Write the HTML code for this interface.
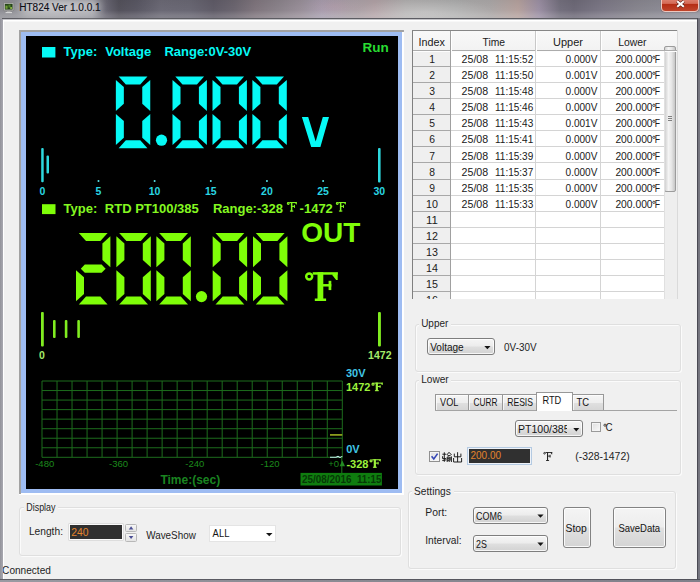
<!DOCTYPE html>
<html><head><meta charset="utf-8"><title>HT824</title><style>
html,body{margin:0;padding:0}
body{width:700px;height:582px;overflow:hidden;position:relative;background:#f0f0f0;font-family:"Liberation Sans",sans-serif;}
.s{position:absolute;left:0;top:0;overflow:visible;}
text{white-space:pre}
.b{position:absolute;}
#title{position:absolute;left:0;top:0;width:700px;height:19px;
 background:
  linear-gradient(180deg,rgba(0,0,0,0.06) 0,rgba(0,0,0,0) 55%,rgba(255,255,255,0.13) 80%,rgba(255,255,255,0.16) 100%),
  radial-gradient(ellipse 70px 14px at 425px 12px,rgba(255,255,255,0.22),rgba(255,255,255,0) 100%),
  radial-gradient(ellipse 30px 12px at 335px 6px,rgba(200,150,170,0.25),rgba(200,150,170,0) 100%),
  linear-gradient(90deg,#8e8e94 0,#909096 2%,#98989e 8%,#8c8c94 13.2%,#686672 15.2%,#54525c 17%,#5a5864 19.5%,#6c6a76 23%,#6a6874 27%,#605c68 30.5%,#6c6670 33.5%,#80767e 36.5%,#8c848c 40%,#9a909a 43%,#a69eae 46%,#aaa2a8 50%,#b2a2a6 53.5%,#b0aeae 58%,#acacac 65%,#aca8a8 70%,#b6a29e 74%,#9c90a4 77%,#74707e 80%,#6e6a78 82%,#7c7886 86%,#88868f 91%,#94949e 100%);}
#tline{position:absolute;left:2px;top:18px;width:696px;height:2px;background:linear-gradient(#5c5c62 0,#5c5c62 50%,#c2c2c6 50%,#c2c2c6 100%);}
#client{position:absolute;left:3px;top:20px;width:694px;height:558.6px;background:#f0f0f0;box-shadow:inset 1px 1px 0 #fff, inset 0 2px 0 #f8f8f8;}
#fl{position:absolute;left:0;top:19px;width:2.9px;height:563px;background:linear-gradient(90deg,#92929a 0,#a2a2aa 70%,#a8a8b0 100%);}
#fr{position:absolute;left:696.9px;top:18px;width:3.1px;height:564px;background:linear-gradient(90deg,#44444c 0,#50505a 30%,#74747e 45%,#787882 100%);}
#fb{position:absolute;left:0;top:578.6px;width:700px;height:3.4px;background:linear-gradient(180deg,rgba(40,40,48,0.75) 0,rgba(40,40,48,0.35) 30%,rgba(40,40,48,0) 50%),linear-gradient(90deg,#9a9aa2 0,#8c8c94 40%,#80808a 100%);}
</style></head><body>
<div id="title"></div>
<div id="tline"></div>
<div id="client"></div>
<div class="b" style="left:20px;top:0px;width:80px;height:14px;border-radius:7px;background:rgba(255,255,255,0.50);filter:blur(5px)"></div>
<svg class="b" style="left:3px;top:2px" width="12" height="12" viewBox="0 0 12 12"><rect x="0.6" y="0.6" width="10.2" height="8.2" rx="1" fill="#c4c4c4" stroke="#7a7a7a" stroke-width="0.8"/><rect x="1.8" y="1.8" width="7.8" height="5.8" fill="#25441a"/><rect x="2.4" y="3.6" width="2.2" height="3.2" fill="#6f9c34"/><rect x="5.4" y="2.6" width="2.2" height="3" fill="#4f7f26"/><rect x="7.2" y="5" width="1.8" height="2" fill="#86b040"/><rect x="4" y="9" width="3.5" height="1.2" fill="#a8a8a8"/><rect x="2.6" y="10.1" width="6.4" height="1" fill="#dcdcdc"/></svg>
<svg class="s" width="1" height="1"><text x="19.20" y="10.70" font-size="10.00" fill="#0c0c14" textLength="81.50" lengthAdjust="spacingAndGlyphs" stroke="#0c0c14" stroke-width="0.1">HT824 Ver 1.0.0.1</text></svg>
<div class="b" style="left:661px;top:-3px;width:36px;height:13.2px;border:1px solid #ecc8c0;border-radius:0 0 4px 4px;background:linear-gradient(#e08878 0,#d46a56 42%,#b42c14 46%,#c0452c 100%);box-shadow:0 0 1px #502020"></div>
<svg class="b" style="left:675px;top:0px" width="11" height="8" viewBox="0 0 11 8"><path d="M2.2 1.2 L8.8 6.8 M8.8 1.2 L2.2 6.8" stroke="#5a2018" stroke-width="3.2" stroke-linecap="butt"/><path d="M2.2 1.2 L8.8 6.8 M8.8 1.2 L2.2 6.8" stroke="#fff" stroke-width="2.1"/></svg>
<div class="b" style="left:19.00px;top:30.00px;width:385.00px;height:465.00px;background:linear-gradient(135deg,#9c9c9c 0,#a8a8a8 49%,#fff 51%,#fff 100%)"></div>
<div class="b" style="left:19.00px;top:30.00px;width:384.00px;height:464.00px;background:#a2a2a2"></div>
<div class="b" style="left:21.00px;top:32.00px;width:383.00px;height:463.00px;background:#fff"></div>
<div class="b" style="left:21.00px;top:32.00px;width:381.00px;height:461.00px;background:#9ebcf2"></div>
<div class="b" style="left:26.00px;top:36.00px;width:372.00px;height:453.00px;background:#000"></div>
<svg class="b" style="left:0;top:0" width="700" height="582" viewBox="0 0 700 582"><polygon points="118.65,76.60 147.45,76.60 140.25,84.60 125.85,84.60" fill="#06faf6"/><polygon points="150.25,79.90 142.25,87.10 142.25,103.80 150.25,110.90" fill="#06faf6"/><polygon points="150.25,113.90 142.25,121.00 142.25,137.70 150.25,144.90" fill="#06faf6"/><polygon points="118.65,148.20 147.45,148.20 140.25,140.20 125.85,140.20" fill="#06faf6"/><polygon points="115.85,113.90 123.85,121.00 123.85,137.70 115.85,144.90" fill="#06faf6"/><polygon points="115.85,79.90 123.85,87.10 123.85,103.80 115.85,110.90" fill="#06faf6"/><polygon points="175.30,76.60 204.10,76.60 196.90,84.60 182.50,84.60" fill="#06faf6"/><polygon points="206.90,79.90 198.90,87.10 198.90,103.80 206.90,110.90" fill="#06faf6"/><polygon points="206.90,113.90 198.90,121.00 198.90,137.70 206.90,144.90" fill="#06faf6"/><polygon points="175.30,148.20 204.10,148.20 196.90,140.20 182.50,140.20" fill="#06faf6"/><polygon points="172.50,113.90 180.50,121.00 180.50,137.70 172.50,144.90" fill="#06faf6"/><polygon points="172.50,79.90 180.50,87.10 180.50,103.80 172.50,110.90" fill="#06faf6"/><polygon points="215.30,76.60 244.10,76.60 236.90,84.60 222.50,84.60" fill="#06faf6"/><polygon points="246.90,79.90 238.90,87.10 238.90,103.80 246.90,110.90" fill="#06faf6"/><polygon points="246.90,113.90 238.90,121.00 238.90,137.70 246.90,144.90" fill="#06faf6"/><polygon points="215.30,148.20 244.10,148.20 236.90,140.20 222.50,140.20" fill="#06faf6"/><polygon points="212.50,113.90 220.50,121.00 220.50,137.70 212.50,144.90" fill="#06faf6"/><polygon points="212.50,79.90 220.50,87.10 220.50,103.80 212.50,110.90" fill="#06faf6"/><polygon points="255.20,76.60 284.00,76.60 276.80,84.60 262.40,84.60" fill="#06faf6"/><polygon points="286.80,79.90 278.80,87.10 278.80,103.80 286.80,110.90" fill="#06faf6"/><polygon points="286.80,113.90 278.80,121.00 278.80,137.70 286.80,144.90" fill="#06faf6"/><polygon points="255.20,148.20 284.00,148.20 276.80,140.20 262.40,140.20" fill="#06faf6"/><polygon points="252.40,113.90 260.40,121.00 260.40,137.70 252.40,144.90" fill="#06faf6"/><polygon points="252.40,79.90 260.40,87.10 260.40,103.80 252.40,110.90" fill="#06faf6"/><circle cx="161.5" cy="140.2" r="5.6" fill="#06faf6"/><polygon points="301.9,117 308.2,117 315.7,141.5 322.8,117 329,117 320.4,146.9 311.2,146.9" fill="#06faf6"/><polygon points="78.80,232.90 107.60,232.90 100.40,240.90 86.00,240.90" fill="#7ffe08"/><polygon points="110.40,236.20 102.40,243.40 102.40,260.10 110.40,267.20" fill="#7ffe08"/><polygon points="80.80,268.70 84.80,264.60 101.60,264.60 105.60,268.70 101.60,272.80 84.80,272.80" fill="#7ffe08"/><polygon points="76.00,270.20 84.00,277.30 84.00,294.00 76.00,301.20" fill="#7ffe08"/><polygon points="78.80,304.50 107.60,304.50 100.40,296.50 86.00,296.50" fill="#7ffe08"/><polygon points="119.20,232.90 148.00,232.90 140.80,240.90 126.40,240.90" fill="#7ffe08"/><polygon points="150.80,236.20 142.80,243.40 142.80,260.10 150.80,267.20" fill="#7ffe08"/><polygon points="150.80,270.20 142.80,277.30 142.80,294.00 150.80,301.20" fill="#7ffe08"/><polygon points="119.20,304.50 148.00,304.50 140.80,296.50 126.40,296.50" fill="#7ffe08"/><polygon points="116.40,270.20 124.40,277.30 124.40,294.00 116.40,301.20" fill="#7ffe08"/><polygon points="116.40,236.20 124.40,243.40 124.40,260.10 116.40,267.20" fill="#7ffe08"/><polygon points="159.20,232.90 188.00,232.90 180.80,240.90 166.40,240.90" fill="#7ffe08"/><polygon points="190.80,236.20 182.80,243.40 182.80,260.10 190.80,267.20" fill="#7ffe08"/><polygon points="190.80,270.20 182.80,277.30 182.80,294.00 190.80,301.20" fill="#7ffe08"/><polygon points="159.20,304.50 188.00,304.50 180.80,296.50 166.40,296.50" fill="#7ffe08"/><polygon points="156.40,270.20 164.40,277.30 164.40,294.00 156.40,301.20" fill="#7ffe08"/><polygon points="156.40,236.20 164.40,243.40 164.40,260.10 156.40,267.20" fill="#7ffe08"/><polygon points="215.50,232.90 244.30,232.90 237.10,240.90 222.70,240.90" fill="#7ffe08"/><polygon points="247.10,236.20 239.10,243.40 239.10,260.10 247.10,267.20" fill="#7ffe08"/><polygon points="247.10,270.20 239.10,277.30 239.10,294.00 247.10,301.20" fill="#7ffe08"/><polygon points="215.50,304.50 244.30,304.50 237.10,296.50 222.70,296.50" fill="#7ffe08"/><polygon points="212.70,270.20 220.70,277.30 220.70,294.00 212.70,301.20" fill="#7ffe08"/><polygon points="212.70,236.20 220.70,243.40 220.70,260.10 212.70,267.20" fill="#7ffe08"/><polygon points="255.80,232.90 284.60,232.90 277.40,240.90 263.00,240.90" fill="#7ffe08"/><polygon points="287.40,236.20 279.40,243.40 279.40,260.10 287.40,267.20" fill="#7ffe08"/><polygon points="287.40,270.20 279.40,277.30 279.40,294.00 287.40,301.20" fill="#7ffe08"/><polygon points="255.80,304.50 284.60,304.50 277.40,296.50 263.00,296.50" fill="#7ffe08"/><polygon points="253.00,270.20 261.00,277.30 261.00,294.00 253.00,301.20" fill="#7ffe08"/><polygon points="253.00,236.20 261.00,243.40 261.00,260.10 253.00,267.20" fill="#7ffe08"/><circle cx="201.5" cy="296.6" r="5.6" fill="#7ffe08"/><rect x="42" y="47" width="13.4" height="10.5" fill="#06faf6"/><rect x="42" y="204.2" width="13.5" height="9.9" fill="#7ffe08"/><rect x="41.2" y="148" width="2.5" height="34.2" rx="1" fill="#2ed8de"/><rect x="46.5" y="155.4" width="2.5" height="18.2" rx="1" fill="#2ed8de"/><rect x="378" y="148" width="2.6" height="34.5" rx="1" fill="#2ed8de"/><circle cx="98.47" cy="181" r="1.0" fill="#58e4ec"/><circle cx="154.63" cy="181" r="1.0" fill="#58e4ec"/><circle cx="210.80" cy="181" r="1.0" fill="#58e4ec"/><circle cx="266.96" cy="181" r="1.0" fill="#58e4ec"/><circle cx="323.12" cy="181" r="1.0" fill="#58e4ec"/><rect x="41" y="312" width="2.8" height="34.4" rx="1" fill="#80ec20"/><rect x="53.00" y="320" width="2.6" height="18" rx="1" fill="#80ec20"/><rect x="64.80" y="320" width="2.6" height="18" rx="1" fill="#80ec20"/><rect x="77.30" y="320" width="2.6" height="18" rx="1" fill="#80ec20"/><rect x="378" y="312" width="2.9" height="34.4" rx="1" fill="#80ec20"/><rect x="41.50" y="381.00" width="1" height="76.30" fill="#1d6c1d"/><rect x="56.52" y="381.00" width="1" height="76.30" fill="#1d6c1d"/><rect x="71.53" y="381.00" width="1" height="76.30" fill="#1d6c1d"/><rect x="86.55" y="381.00" width="1" height="76.30" fill="#1d6c1d"/><rect x="101.56" y="381.00" width="1" height="76.30" fill="#1d6c1d"/><rect x="116.58" y="381.00" width="1" height="76.30" fill="#1d6c1d"/><rect x="131.59" y="381.00" width="1" height="76.30" fill="#1d6c1d"/><rect x="146.60" y="381.00" width="1" height="76.30" fill="#1d6c1d"/><rect x="161.62" y="381.00" width="1" height="76.30" fill="#1d6c1d"/><rect x="176.64" y="381.00" width="1" height="76.30" fill="#1d6c1d"/><rect x="191.65" y="381.00" width="1" height="76.30" fill="#1d6c1d"/><rect x="206.67" y="381.00" width="1" height="76.30" fill="#1d6c1d"/><rect x="221.68" y="381.00" width="1" height="76.30" fill="#1d6c1d"/><rect x="236.69" y="381.00" width="1" height="76.30" fill="#1d6c1d"/><rect x="251.71" y="381.00" width="1" height="76.30" fill="#1d6c1d"/><rect x="266.73" y="381.00" width="1" height="76.30" fill="#1d6c1d"/><rect x="281.74" y="381.00" width="1" height="76.30" fill="#1d6c1d"/><rect x="296.75" y="381.00" width="1" height="76.30" fill="#1d6c1d"/><rect x="311.77" y="381.00" width="1" height="76.30" fill="#1d6c1d"/><rect x="326.78" y="381.00" width="1" height="76.30" fill="#1d6c1d"/><rect x="341.80" y="381.00" width="1" height="76.30" fill="#1d6c1d"/><rect x="42.00" y="380.50" width="300.30" height="1" fill="#1d6c1d"/><rect x="42.00" y="390.04" width="300.30" height="1" fill="#1d6c1d"/><rect x="42.00" y="399.57" width="300.30" height="1" fill="#1d6c1d"/><rect x="42.00" y="409.11" width="300.30" height="1" fill="#1d6c1d"/><rect x="42.00" y="418.65" width="300.30" height="1" fill="#1d6c1d"/><rect x="42.00" y="428.19" width="300.30" height="1" fill="#1d6c1d"/><rect x="42.00" y="437.73" width="300.30" height="1" fill="#1d6c1d"/><rect x="42.00" y="447.26" width="300.30" height="1" fill="#1d6c1d"/><rect x="42.00" y="456.80" width="300.30" height="1" fill="#1d6c1d"/><rect x="330" y="434" width="12.3" height="1.8" fill="#8a9c1c"/><path d="M330 457.3 L336 457.3 L338 456.4 L340 457.4 L342.3 456.6" stroke="#c8f4f4" stroke-width="1.1" fill="none"/><rect x="341.3" y="457" width="1" height="16" fill="#1f7a1f"/><polygon points="342.3,460.5 339.6,466.3 345,466.3" fill="#238a23"/><rect x="300.5" y="472.9" width="81.4" height="12.6" fill="#0f7d0f"/></svg>
<svg class="s" width="1" height="1"><text x="63.50" y="56.00" font-size="13.00" fill="#06faf6" font-weight="bold">Type:</text></svg>
<svg class="s" width="1" height="1"><text x="105.20" y="56.00" font-size="13.00" fill="#06faf6" font-weight="bold">Voltage</text></svg>
<svg class="s" width="1" height="1"><text x="164.40" y="56.00" font-size="13.00" fill="#06faf6" font-weight="bold">Range:0V-30V</text></svg>
<svg class="s" width="1" height="1"><text x="362.50" y="51.90" font-size="13.50" fill="#28dc32" font-weight="bold">Run</text></svg>
<svg class="s" width="1" height="1"><text x="42.30" y="194.70" font-size="10.50" fill="#2ad6e2" font-weight="bold" text-anchor="middle">0</text></svg>
<svg class="s" width="1" height="1"><text x="98.47" y="194.70" font-size="10.50" fill="#2ad6e2" font-weight="bold" text-anchor="middle">5</text></svg>
<svg class="s" width="1" height="1"><text x="154.63" y="194.70" font-size="10.50" fill="#2ad6e2" font-weight="bold" text-anchor="middle">10</text></svg>
<svg class="s" width="1" height="1"><text x="210.80" y="194.70" font-size="10.50" fill="#2ad6e2" font-weight="bold" text-anchor="middle">15</text></svg>
<svg class="s" width="1" height="1"><text x="266.96" y="194.70" font-size="10.50" fill="#2ad6e2" font-weight="bold" text-anchor="middle">20</text></svg>
<svg class="s" width="1" height="1"><text x="323.12" y="194.70" font-size="10.50" fill="#2ad6e2" font-weight="bold" text-anchor="middle">25</text></svg>
<svg class="s" width="1" height="1"><text x="379.29" y="194.70" font-size="10.50" fill="#2ad6e2" font-weight="bold" text-anchor="middle">30</text></svg>
<svg class="s" width="1" height="1"><text x="63.50" y="212.90" font-size="13.00" fill="#84f820" font-weight="bold">Type:</text></svg>
<svg class="s" width="1" height="1"><text x="104.80" y="212.90" font-size="13.00" fill="#84f820" font-weight="bold">RTD PT100/385</text></svg>
<svg class="s" width="1" height="1"><text x="212.90" y="212.90" font-size="13.00" fill="#84f820" font-weight="bold">Range:-328</text></svg>
<svg class="s" width="1" height="1"><text x="299.60" y="212.90" font-size="13.00" fill="#84f820" font-weight="bold">-1472</text></svg>
<svg class="s" width="1" height="1"><g fill="#84f820"><circle cx="288.26" cy="203.45" r="0.90" fill="none" stroke="#84f820" stroke-width="1.10"/><rect x="289.31" y="202.00" width="7.49" height="1.10"/><polygon points="295.09,203.10 296.80,202.00 296.80,204.57 296.35,204.57"/><rect x="290.87" y="202.00" width="1.50" height="9.40"/><rect x="291.62" y="205.82" width="3.27" height="1.10"/><rect x="293.98" y="204.87" width="0.90" height="3.10"/><rect x="289.94" y="210.50" width="3.39" height="1.10"/></g></svg>
<svg class="s" width="1" height="1"><g fill="#84f820"><circle cx="337.26" cy="203.45" r="0.90" fill="none" stroke="#84f820" stroke-width="1.10"/><rect x="338.31" y="202.00" width="7.49" height="1.10"/><polygon points="344.09,203.10 345.80,202.00 345.80,204.57 345.35,204.57"/><rect x="339.87" y="202.00" width="1.50" height="9.40"/><rect x="340.62" y="205.82" width="3.27" height="1.10"/><rect x="342.98" y="204.87" width="0.90" height="3.10"/><rect x="338.94" y="210.50" width="3.39" height="1.10"/></g></svg>
<svg class="s" width="1" height="1"><text x="301.30" y="241.90" font-size="28.00" fill="#7ffe08" font-weight="bold">OUT</text></svg>
<svg class="s" width="1" height="1"><g fill="#7ffe08"><circle cx="309.20" cy="276.43" r="3.00" fill="none" stroke="#7ffe08" stroke-width="2.45"/><rect x="312.70" y="272.20" width="25.00" height="2.50"/><polygon points="332.00,274.70 337.70,272.20 337.70,279.90 336.20,279.90"/><rect x="317.50" y="272.20" width="5.80" height="28.60"/><rect x="320.40" y="284.05" width="10.90" height="2.50"/><rect x="328.60" y="280.80" width="2.70" height="9.30"/><rect x="314.80" y="298.50" width="11.30" height="2.50"/></g></svg>
<svg class="s" width="1" height="1"><text x="42.00" y="358.80" font-size="10.50" fill="#a4ec6a" font-weight="bold" text-anchor="middle">0</text></svg>
<svg class="s" width="1" height="1"><text x="379.80" y="358.80" font-size="10.50" fill="#a4ec6a" font-weight="bold" text-anchor="middle">1472</text></svg>
<svg class="s" width="1" height="1"><text x="346.00" y="377.40" font-size="11.00" fill="#40c6e6" font-weight="bold">30V</text></svg>
<svg class="s" width="1" height="1"><text x="346.00" y="391.40" font-size="11.00" fill="#9cf23c" font-weight="bold">1472</text></svg>
<svg class="s" width="1" height="1"><g fill="#9cf23c"><circle cx="373.03" cy="384.22" r="1.02" fill="none" stroke="#9cf23c" stroke-width="1.20"/><rect x="374.21" y="382.60" width="8.49" height="1.10"/><polygon points="380.77,383.70 382.70,382.60 382.70,384.90 382.19,384.90"/><rect x="375.73" y="382.60" width="2.20" height="8.40"/><rect x="376.83" y="385.96" width="3.70" height="1.10"/><rect x="379.61" y="385.17" width="0.92" height="2.78"/><rect x="374.93" y="390.10" width="3.84" height="1.10"/></g></svg>
<svg class="s" width="1" height="1"><text x="346.20" y="453.40" font-size="11.00" fill="#40c6e6" font-weight="bold">0V</text></svg>
<svg class="s" width="1" height="1"><text x="346.40" y="468.00" font-size="11.00" fill="#9cf23c" font-weight="bold">-328</text></svg>
<svg class="s" width="1" height="1"><g fill="#9cf23c"><circle cx="371.03" cy="460.82" r="1.02" fill="none" stroke="#9cf23c" stroke-width="1.20"/><rect x="372.21" y="459.20" width="8.49" height="1.10"/><polygon points="378.77,460.30 380.70,459.20 380.70,461.50 380.19,461.50"/><rect x="373.73" y="459.20" width="2.20" height="8.40"/><rect x="374.83" y="462.56" width="3.70" height="1.10"/><rect x="377.61" y="461.77" width="0.92" height="2.78"/><rect x="372.93" y="466.70" width="3.84" height="1.10"/></g></svg>
<svg class="s" width="1" height="1"><text x="44.70" y="467.30" font-size="9.50" fill="#1c8a1c" text-anchor="middle">-480</text></svg>
<svg class="s" width="1" height="1"><text x="118.50" y="467.30" font-size="9.50" fill="#1c8a1c" text-anchor="middle">-360</text></svg>
<svg class="s" width="1" height="1"><text x="194.80" y="467.30" font-size="9.50" fill="#1c8a1c" text-anchor="middle">-240</text></svg>
<svg class="s" width="1" height="1"><text x="270.00" y="467.30" font-size="9.50" fill="#1c8a1c" text-anchor="middle">-120</text></svg>
<svg class="s" width="1" height="1"><text x="328.20" y="466.80" font-size="9.50" fill="#1c8a1c">+0</text></svg>
<svg class="s" width="1" height="1"><text x="160.40" y="483.90" font-size="12.00" fill="#1a8420" font-weight="bold">Time:(sec)</text></svg>
<svg class="s" width="1" height="1"><text x="301.90" y="482.90" font-size="10.20" fill="#063806" font-weight="bold" textLength="49.50" lengthAdjust="spacingAndGlyphs">25/08/2016</text></svg>
<svg class="s" width="1" height="1"><text x="357.00" y="482.90" font-size="10.20" fill="#063806" font-weight="bold" textLength="24.30" lengthAdjust="spacingAndGlyphs">11:15</text></svg>
<div class="b" style="left:411.50px;top:30.00px;width:265.50px;height:269.00px;background:#fff"></div>
<div class="b" style="left:411.50px;top:30.00px;width:265.50px;height:21.00px;background:linear-gradient(#f9f9f9,#f2f2f2)"></div>
<div class="b" style="left:411.50px;top:51.00px;width:39.00px;height:248.00px;background:#efefef"></div>
<div class="b" style="left:664.00px;top:46.00px;width:13.00px;height:253.00px;background:#eeeeee"></div>
<div class="b" style="left:664.00px;top:45.60px;width:11.60px;height:146.40px;background:linear-gradient(90deg,#d2d2d2 0,#f4f4f4 35%,#e6e6e6 65%,#c6c6c6 100%);border:1px solid #9c9c9c;border-radius:2px;box-sizing:border-box"></div>
<div class="b" style="left:667.60px;top:116.00px;width:4.60px;height:0.90px;background:#808080"></div>
<div class="b" style="left:667.60px;top:117.90px;width:4.60px;height:0.90px;background:#808080"></div>
<div class="b" style="left:667.60px;top:119.80px;width:4.60px;height:0.90px;background:#808080"></div>
<div class="b" style="left:412.00px;top:50.10px;width:265.00px;height:1.00px;background:#acacac"></div>
<div class="b" style="left:412.00px;top:51.10px;width:265.00px;height:1.00px;background:#fdfdfd"></div>
<div class="b" style="left:412.00px;top:66.15px;width:38.50px;height:1.00px;background:#a8a8a8"></div>
<div class="b" style="left:451.00px;top:66.15px;width:213.00px;height:1.00px;background:#d4d4d4"></div>
<div class="b" style="left:412.00px;top:82.20px;width:38.50px;height:1.00px;background:#a8a8a8"></div>
<div class="b" style="left:451.00px;top:82.20px;width:213.00px;height:1.00px;background:#d4d4d4"></div>
<div class="b" style="left:412.00px;top:98.25px;width:38.50px;height:1.00px;background:#a8a8a8"></div>
<div class="b" style="left:451.00px;top:98.25px;width:213.00px;height:1.00px;background:#d4d4d4"></div>
<div class="b" style="left:412.00px;top:114.30px;width:38.50px;height:1.00px;background:#a8a8a8"></div>
<div class="b" style="left:451.00px;top:114.30px;width:213.00px;height:1.00px;background:#d4d4d4"></div>
<div class="b" style="left:412.00px;top:130.35px;width:38.50px;height:1.00px;background:#a8a8a8"></div>
<div class="b" style="left:451.00px;top:130.35px;width:213.00px;height:1.00px;background:#d4d4d4"></div>
<div class="b" style="left:412.00px;top:146.40px;width:38.50px;height:1.00px;background:#a8a8a8"></div>
<div class="b" style="left:451.00px;top:146.40px;width:213.00px;height:1.00px;background:#d4d4d4"></div>
<div class="b" style="left:412.00px;top:162.45px;width:38.50px;height:1.00px;background:#a8a8a8"></div>
<div class="b" style="left:451.00px;top:162.45px;width:213.00px;height:1.00px;background:#d4d4d4"></div>
<div class="b" style="left:412.00px;top:178.50px;width:38.50px;height:1.00px;background:#a8a8a8"></div>
<div class="b" style="left:451.00px;top:178.50px;width:213.00px;height:1.00px;background:#d4d4d4"></div>
<div class="b" style="left:412.00px;top:194.55px;width:38.50px;height:1.00px;background:#a8a8a8"></div>
<div class="b" style="left:451.00px;top:194.55px;width:213.00px;height:1.00px;background:#d4d4d4"></div>
<div class="b" style="left:412.00px;top:210.60px;width:38.50px;height:1.00px;background:#a8a8a8"></div>
<div class="b" style="left:451.00px;top:210.60px;width:213.00px;height:1.00px;background:#d4d4d4"></div>
<div class="b" style="left:412.00px;top:226.65px;width:38.50px;height:1.00px;background:#a8a8a8"></div>
<div class="b" style="left:451.00px;top:226.65px;width:213.00px;height:1.00px;background:#d4d4d4"></div>
<div class="b" style="left:412.00px;top:242.70px;width:38.50px;height:1.00px;background:#a8a8a8"></div>
<div class="b" style="left:451.00px;top:242.70px;width:213.00px;height:1.00px;background:#d4d4d4"></div>
<div class="b" style="left:412.00px;top:258.75px;width:38.50px;height:1.00px;background:#a8a8a8"></div>
<div class="b" style="left:451.00px;top:258.75px;width:213.00px;height:1.00px;background:#d4d4d4"></div>
<div class="b" style="left:412.00px;top:274.80px;width:38.50px;height:1.00px;background:#a8a8a8"></div>
<div class="b" style="left:451.00px;top:274.80px;width:213.00px;height:1.00px;background:#d4d4d4"></div>
<div class="b" style="left:412.00px;top:290.85px;width:38.50px;height:1.00px;background:#a8a8a8"></div>
<div class="b" style="left:451.00px;top:290.85px;width:213.00px;height:1.00px;background:#d4d4d4"></div>
<div class="b" style="left:450.00px;top:31.00px;width:1.00px;height:268.00px;background:#a0a0a0"></div>
<div class="b" style="left:451.00px;top:31.00px;width:1.00px;height:20.00px;background:#fff"></div>
<div class="b" style="left:535.00px;top:31.00px;width:1.00px;height:20.00px;background:#c8c8c8"></div>
<div class="b" style="left:536.00px;top:31.00px;width:1.00px;height:20.00px;background:#fff"></div>
<div class="b" style="left:599.60px;top:31.00px;width:1.00px;height:20.00px;background:#c8c8c8"></div>
<div class="b" style="left:600.60px;top:31.00px;width:1.00px;height:20.00px;background:#fff"></div>
<div class="b" style="left:535.00px;top:51.00px;width:1.00px;height:248.00px;background:#d4d4d4"></div>
<div class="b" style="left:599.60px;top:51.00px;width:1.00px;height:248.00px;background:#d4d4d4"></div>
<div class="b" style="left:663.50px;top:51.00px;width:1.00px;height:248.00px;background:#e0e0e0"></div>
<div class="b" style="left:411.50px;top:30.00px;width:1.10px;height:269.00px;background:#808080"></div>
<div class="b" style="left:411.50px;top:30.00px;width:265.50px;height:1.10px;background:#868686"></div>
<div class="b" style="left:676.50px;top:30.00px;width:1.00px;height:269.00px;background:#dadada"></div>
<svg class="s" width="1" height="1"><text x="418.50" y="45.90" font-size="10.30" fill="#202020" textLength="26.40" lengthAdjust="spacingAndGlyphs">Index</text></svg>
<svg class="s" width="1" height="1"><text x="482.50" y="45.90" font-size="10.30" fill="#202020" textLength="22.50" lengthAdjust="spacingAndGlyphs">Time</text></svg>
<svg class="s" width="1" height="1"><text x="553.00" y="45.90" font-size="10.30" fill="#202020" textLength="29.90" lengthAdjust="spacingAndGlyphs">Upper</text></svg>
<svg class="s" width="1" height="1"><text x="618.20" y="45.90" font-size="10.30" fill="#202020" textLength="28.30" lengthAdjust="spacingAndGlyphs">Lower</text></svg>
<svg class="s" width="1" height="1"><text x="432.20" y="63.20" font-size="10.30" fill="#202020" text-anchor="middle">1</text></svg>
<svg class="s" width="1" height="1"><text x="461.60" y="63.20" font-size="10.30" fill="#202020" textLength="26.60" lengthAdjust="spacingAndGlyphs">25/08</text></svg>
<svg class="s" width="1" height="1"><text x="495.00" y="63.20" font-size="10.30" fill="#202020" textLength="38.20" lengthAdjust="spacingAndGlyphs">11:15:52</text></svg>
<svg class="s" width="1" height="1"><text x="565.60" y="63.20" font-size="10.30" fill="#202020" textLength="31.80" lengthAdjust="spacingAndGlyphs">0.000V</text></svg>
<svg class="s" width="1" height="1"><text x="615.40" y="63.20" font-size="10.30" fill="#202020" textLength="37.20" lengthAdjust="spacingAndGlyphs">200.000</text></svg>
<svg class="s" width="1" height="1"><circle cx="653.90" cy="57.30" r="1.15" fill="none" stroke="#202020" stroke-width="0.80"/></svg>
<svg class="s" width="1" height="1"><text x="654.80" y="63.20" font-size="10.30" fill="#202020" textLength="5.30" lengthAdjust="spacingAndGlyphs">F</text></svg>
<svg class="s" width="1" height="1"><text x="432.20" y="79.25" font-size="10.30" fill="#202020" text-anchor="middle">2</text></svg>
<svg class="s" width="1" height="1"><text x="461.60" y="79.25" font-size="10.30" fill="#202020" textLength="26.60" lengthAdjust="spacingAndGlyphs">25/08</text></svg>
<svg class="s" width="1" height="1"><text x="495.00" y="79.25" font-size="10.30" fill="#202020" textLength="38.20" lengthAdjust="spacingAndGlyphs">11:15:50</text></svg>
<svg class="s" width="1" height="1"><text x="565.60" y="79.25" font-size="10.30" fill="#202020" textLength="31.80" lengthAdjust="spacingAndGlyphs">0.001V</text></svg>
<svg class="s" width="1" height="1"><text x="615.40" y="79.25" font-size="10.30" fill="#202020" textLength="37.20" lengthAdjust="spacingAndGlyphs">200.000</text></svg>
<svg class="s" width="1" height="1"><circle cx="653.90" cy="73.30" r="1.15" fill="none" stroke="#202020" stroke-width="0.80"/></svg>
<svg class="s" width="1" height="1"><text x="654.80" y="79.25" font-size="10.30" fill="#202020" textLength="5.30" lengthAdjust="spacingAndGlyphs">F</text></svg>
<svg class="s" width="1" height="1"><text x="432.20" y="95.30" font-size="10.30" fill="#202020" text-anchor="middle">3</text></svg>
<svg class="s" width="1" height="1"><text x="461.60" y="95.30" font-size="10.30" fill="#202020" textLength="26.60" lengthAdjust="spacingAndGlyphs">25/08</text></svg>
<svg class="s" width="1" height="1"><text x="495.00" y="95.30" font-size="10.30" fill="#202020" textLength="38.20" lengthAdjust="spacingAndGlyphs">11:15:48</text></svg>
<svg class="s" width="1" height="1"><text x="565.60" y="95.30" font-size="10.30" fill="#202020" textLength="31.80" lengthAdjust="spacingAndGlyphs">0.000V</text></svg>
<svg class="s" width="1" height="1"><text x="615.40" y="95.30" font-size="10.30" fill="#202020" textLength="37.20" lengthAdjust="spacingAndGlyphs">200.000</text></svg>
<svg class="s" width="1" height="1"><circle cx="653.90" cy="89.30" r="1.15" fill="none" stroke="#202020" stroke-width="0.80"/></svg>
<svg class="s" width="1" height="1"><text x="654.80" y="95.30" font-size="10.30" fill="#202020" textLength="5.30" lengthAdjust="spacingAndGlyphs">F</text></svg>
<svg class="s" width="1" height="1"><text x="432.20" y="111.35" font-size="10.30" fill="#202020" text-anchor="middle">4</text></svg>
<svg class="s" width="1" height="1"><text x="461.60" y="111.35" font-size="10.30" fill="#202020" textLength="26.60" lengthAdjust="spacingAndGlyphs">25/08</text></svg>
<svg class="s" width="1" height="1"><text x="495.00" y="111.35" font-size="10.30" fill="#202020" textLength="38.20" lengthAdjust="spacingAndGlyphs">11:15:46</text></svg>
<svg class="s" width="1" height="1"><text x="565.60" y="111.35" font-size="10.30" fill="#202020" textLength="31.80" lengthAdjust="spacingAndGlyphs">0.000V</text></svg>
<svg class="s" width="1" height="1"><text x="615.40" y="111.35" font-size="10.30" fill="#202020" textLength="37.20" lengthAdjust="spacingAndGlyphs">200.000</text></svg>
<svg class="s" width="1" height="1"><circle cx="653.90" cy="105.30" r="1.15" fill="none" stroke="#202020" stroke-width="0.80"/></svg>
<svg class="s" width="1" height="1"><text x="654.80" y="111.35" font-size="10.30" fill="#202020" textLength="5.30" lengthAdjust="spacingAndGlyphs">F</text></svg>
<svg class="s" width="1" height="1"><text x="432.20" y="127.40" font-size="10.30" fill="#202020" text-anchor="middle">5</text></svg>
<svg class="s" width="1" height="1"><text x="461.60" y="127.40" font-size="10.30" fill="#202020" textLength="26.60" lengthAdjust="spacingAndGlyphs">25/08</text></svg>
<svg class="s" width="1" height="1"><text x="495.00" y="127.40" font-size="10.30" fill="#202020" textLength="38.20" lengthAdjust="spacingAndGlyphs">11:15:43</text></svg>
<svg class="s" width="1" height="1"><text x="565.60" y="127.40" font-size="10.30" fill="#202020" textLength="31.80" lengthAdjust="spacingAndGlyphs">0.001V</text></svg>
<svg class="s" width="1" height="1"><text x="615.40" y="127.40" font-size="10.30" fill="#202020" textLength="37.20" lengthAdjust="spacingAndGlyphs">200.000</text></svg>
<svg class="s" width="1" height="1"><circle cx="653.90" cy="121.30" r="1.15" fill="none" stroke="#202020" stroke-width="0.80"/></svg>
<svg class="s" width="1" height="1"><text x="654.80" y="127.40" font-size="10.30" fill="#202020" textLength="5.30" lengthAdjust="spacingAndGlyphs">F</text></svg>
<svg class="s" width="1" height="1"><text x="432.20" y="143.45" font-size="10.30" fill="#202020" text-anchor="middle">6</text></svg>
<svg class="s" width="1" height="1"><text x="461.60" y="143.45" font-size="10.30" fill="#202020" textLength="26.60" lengthAdjust="spacingAndGlyphs">25/08</text></svg>
<svg class="s" width="1" height="1"><text x="495.00" y="143.45" font-size="10.30" fill="#202020" textLength="38.20" lengthAdjust="spacingAndGlyphs">11:15:41</text></svg>
<svg class="s" width="1" height="1"><text x="565.60" y="143.45" font-size="10.30" fill="#202020" textLength="31.80" lengthAdjust="spacingAndGlyphs">0.000V</text></svg>
<svg class="s" width="1" height="1"><text x="615.40" y="143.45" font-size="10.30" fill="#202020" textLength="37.20" lengthAdjust="spacingAndGlyphs">200.000</text></svg>
<svg class="s" width="1" height="1"><circle cx="653.90" cy="137.30" r="1.15" fill="none" stroke="#202020" stroke-width="0.80"/></svg>
<svg class="s" width="1" height="1"><text x="654.80" y="143.45" font-size="10.30" fill="#202020" textLength="5.30" lengthAdjust="spacingAndGlyphs">F</text></svg>
<svg class="s" width="1" height="1"><text x="432.20" y="159.50" font-size="10.30" fill="#202020" text-anchor="middle">7</text></svg>
<svg class="s" width="1" height="1"><text x="461.60" y="159.50" font-size="10.30" fill="#202020" textLength="26.60" lengthAdjust="spacingAndGlyphs">25/08</text></svg>
<svg class="s" width="1" height="1"><text x="495.00" y="159.50" font-size="10.30" fill="#202020" textLength="38.20" lengthAdjust="spacingAndGlyphs">11:15:39</text></svg>
<svg class="s" width="1" height="1"><text x="565.60" y="159.50" font-size="10.30" fill="#202020" textLength="31.80" lengthAdjust="spacingAndGlyphs">0.000V</text></svg>
<svg class="s" width="1" height="1"><text x="615.40" y="159.50" font-size="10.30" fill="#202020" textLength="37.20" lengthAdjust="spacingAndGlyphs">200.000</text></svg>
<svg class="s" width="1" height="1"><circle cx="653.90" cy="154.30" r="1.15" fill="none" stroke="#202020" stroke-width="0.80"/></svg>
<svg class="s" width="1" height="1"><text x="654.80" y="159.50" font-size="10.30" fill="#202020" textLength="5.30" lengthAdjust="spacingAndGlyphs">F</text></svg>
<svg class="s" width="1" height="1"><text x="432.20" y="175.55" font-size="10.30" fill="#202020" text-anchor="middle">8</text></svg>
<svg class="s" width="1" height="1"><text x="461.60" y="175.55" font-size="10.30" fill="#202020" textLength="26.60" lengthAdjust="spacingAndGlyphs">25/08</text></svg>
<svg class="s" width="1" height="1"><text x="495.00" y="175.55" font-size="10.30" fill="#202020" textLength="38.20" lengthAdjust="spacingAndGlyphs">11:15:37</text></svg>
<svg class="s" width="1" height="1"><text x="565.60" y="175.55" font-size="10.30" fill="#202020" textLength="31.80" lengthAdjust="spacingAndGlyphs">0.000V</text></svg>
<svg class="s" width="1" height="1"><text x="615.40" y="175.55" font-size="10.30" fill="#202020" textLength="37.20" lengthAdjust="spacingAndGlyphs">200.000</text></svg>
<svg class="s" width="1" height="1"><circle cx="653.90" cy="170.30" r="1.15" fill="none" stroke="#202020" stroke-width="0.80"/></svg>
<svg class="s" width="1" height="1"><text x="654.80" y="175.55" font-size="10.30" fill="#202020" textLength="5.30" lengthAdjust="spacingAndGlyphs">F</text></svg>
<svg class="s" width="1" height="1"><text x="432.20" y="191.60" font-size="10.30" fill="#202020" text-anchor="middle">9</text></svg>
<svg class="s" width="1" height="1"><text x="461.60" y="191.60" font-size="10.30" fill="#202020" textLength="26.60" lengthAdjust="spacingAndGlyphs">25/08</text></svg>
<svg class="s" width="1" height="1"><text x="495.00" y="191.60" font-size="10.30" fill="#202020" textLength="38.20" lengthAdjust="spacingAndGlyphs">11:15:35</text></svg>
<svg class="s" width="1" height="1"><text x="565.60" y="191.60" font-size="10.30" fill="#202020" textLength="31.80" lengthAdjust="spacingAndGlyphs">0.000V</text></svg>
<svg class="s" width="1" height="1"><text x="615.40" y="191.60" font-size="10.30" fill="#202020" textLength="37.20" lengthAdjust="spacingAndGlyphs">200.000</text></svg>
<svg class="s" width="1" height="1"><circle cx="653.90" cy="186.30" r="1.15" fill="none" stroke="#202020" stroke-width="0.80"/></svg>
<svg class="s" width="1" height="1"><text x="654.80" y="191.60" font-size="10.30" fill="#202020" textLength="5.30" lengthAdjust="spacingAndGlyphs">F</text></svg>
<svg class="s" width="1" height="1"><text x="426.10" y="207.65" font-size="10.30" fill="#202020" textLength="11.90" lengthAdjust="spacingAndGlyphs">10</text></svg>
<svg class="s" width="1" height="1"><text x="461.60" y="207.65" font-size="10.30" fill="#202020" textLength="26.60" lengthAdjust="spacingAndGlyphs">25/08</text></svg>
<svg class="s" width="1" height="1"><text x="495.00" y="207.65" font-size="10.30" fill="#202020" textLength="38.20" lengthAdjust="spacingAndGlyphs">11:15:33</text></svg>
<svg class="s" width="1" height="1"><text x="565.60" y="207.65" font-size="10.30" fill="#202020" textLength="31.80" lengthAdjust="spacingAndGlyphs">0.000V</text></svg>
<svg class="s" width="1" height="1"><text x="615.40" y="207.65" font-size="10.30" fill="#202020" textLength="37.20" lengthAdjust="spacingAndGlyphs">200.000</text></svg>
<svg class="s" width="1" height="1"><circle cx="653.90" cy="202.30" r="1.15" fill="none" stroke="#202020" stroke-width="0.80"/></svg>
<svg class="s" width="1" height="1"><text x="654.80" y="207.65" font-size="10.30" fill="#202020" textLength="5.30" lengthAdjust="spacingAndGlyphs">F</text></svg>
<svg class="s" width="1" height="1"><text x="426.10" y="223.70" font-size="10.30" fill="#202020" textLength="11.90" lengthAdjust="spacingAndGlyphs">11</text></svg>
<svg class="s" width="1" height="1"><text x="426.10" y="239.75" font-size="10.30" fill="#202020" textLength="11.90" lengthAdjust="spacingAndGlyphs">12</text></svg>
<svg class="s" width="1" height="1"><text x="426.10" y="255.80" font-size="10.30" fill="#202020" textLength="11.90" lengthAdjust="spacingAndGlyphs">13</text></svg>
<svg class="s" width="1" height="1"><text x="426.10" y="271.85" font-size="10.30" fill="#202020" textLength="11.90" lengthAdjust="spacingAndGlyphs">14</text></svg>
<svg class="s" width="1" height="1"><text x="426.10" y="287.90" font-size="10.30" fill="#202020" textLength="11.90" lengthAdjust="spacingAndGlyphs">15</text></svg>
<svg class="s" width="1" height="1"><text x="426.10" y="303.95" font-size="10.30" fill="#202020" textLength="11.90" lengthAdjust="spacingAndGlyphs">16</text></svg>
<div class="b" style="left:405.00px;top:299.00px;width:290.00px;height:14.00px;background:#f0f0f0"></div>
<div class="b" style="left:414.60px;top:323.60px;width:266.40px;height:48.20px;border:1px solid #dfdfdf;border-radius:3px;box-shadow:inset 1px 1px 0 #fbfbfb,1px 1px 0 #fbfbfb;box-sizing:border-box"></div>
<div class="b" style="left:419.20px;top:321.60px;width:32.00px;height:5.00px;background:#f0f0f0"></div>
<svg class="s" width="1" height="1"><text x="421.20" y="326.90" font-size="10.30" fill="#1e1e1e" textLength="27.10" lengthAdjust="spacingAndGlyphs">Upper</text></svg>
<div class="b" style="left:414.60px;top:379.60px;width:266.40px;height:95.00px;border:1px solid #dfdfdf;border-radius:3px;box-shadow:inset 1px 1px 0 #fbfbfb,1px 1px 0 #fbfbfb;box-sizing:border-box"></div>
<div class="b" style="left:419.20px;top:377.60px;width:32.00px;height:5.00px;background:#f0f0f0"></div>
<svg class="s" width="1" height="1"><text x="421.20" y="382.90" font-size="10.30" fill="#1e1e1e" textLength="27.50" lengthAdjust="spacingAndGlyphs">Lower</text></svg>
<div class="b" style="left:407.60px;top:491.40px;width:268.80px;height:77.40px;border:1px solid #dfdfdf;border-radius:3px;box-shadow:inset 1px 1px 0 #fbfbfb,1px 1px 0 #fbfbfb;box-sizing:border-box"></div>
<div class="b" style="left:412.10px;top:489.40px;width:41.50px;height:5.00px;background:#f0f0f0"></div>
<svg class="s" width="1" height="1"><text x="414.10" y="495.40" font-size="10.30" fill="#1e1e1e" textLength="36.70" lengthAdjust="spacingAndGlyphs">Settings</text></svg>
<div class="b" style="left:19.30px;top:506.60px;width:381.90px;height:49.00px;border:1px solid #dfdfdf;border-radius:3px;box-shadow:inset 1px 1px 0 #fbfbfb,1px 1px 0 #fbfbfb;box-sizing:border-box"></div>
<div class="b" style="left:24.30px;top:504.60px;width:34.00px;height:5.00px;background:#f0f0f0"></div>
<svg class="s" width="1" height="1"><text x="26.30" y="510.70" font-size="10.30" fill="#1e1e1e" textLength="29.20" lengthAdjust="spacingAndGlyphs">Display</text></svg>
<div class="b" style="left:427.00px;top:338.20px;width:67.60px;height:17.30px;border:1px solid #7e7e7e;border-radius:3px;background:linear-gradient(#f5f5f5 0,#ececec 48%,#dfdfdf 52%,#d2d2d2 100%);box-shadow:inset 0 0 0 1px rgba(255,255,255,0.8);box-sizing:border-box"></div>
<svg class="s" width="1" height="1"><text x="430.20" y="350.70" font-size="10.30" fill="#151515" textLength="33.50" lengthAdjust="spacingAndGlyphs">Voltage</text></svg>
<svg class="s" width="1" height="1"><polygon points="484.30,345.90 490.50,345.90 487.40,349.30" fill="#141414"/></svg>
<svg class="s" width="1" height="1"><text x="504.10" y="350.70" font-size="10.30" fill="#1e1e1e" textLength="32.40" lengthAdjust="spacingAndGlyphs">0V-30V</text></svg>
<div class="b" style="left:435.00px;top:409.60px;width:242.00px;height:1.50px;background:#a4a4a4"></div>
<div class="b" style="left:435.00px;top:394.00px;width:33.60px;height:15.80px;border:1px solid #989898;border-bottom:none;background:linear-gradient(#f5f5f5 0,#eeeeee 50%,#e0e0e0 52%,#d6d6d6 100%);box-shadow:inset 1px 1px 0 rgba(255,255,255,0.7);box-sizing:border-box"></div>
<svg class="s" width="1" height="1"><text x="440.10" y="405.60" font-size="10.30" fill="#151515" textLength="18.30" lengthAdjust="spacingAndGlyphs">VOL</text></svg>
<div class="b" style="left:468.00px;top:394.00px;width:34.60px;height:15.80px;border:1px solid #989898;border-bottom:none;background:linear-gradient(#f5f5f5 0,#eeeeee 50%,#e0e0e0 52%,#d6d6d6 100%);box-shadow:inset 1px 1px 0 rgba(255,255,255,0.7);box-sizing:border-box"></div>
<svg class="s" width="1" height="1"><text x="473.50" y="405.60" font-size="10.30" fill="#151515" textLength="23.90" lengthAdjust="spacingAndGlyphs">CURR</text></svg>
<div class="b" style="left:502.00px;top:394.00px;width:35.00px;height:15.80px;border:1px solid #989898;border-bottom:none;background:linear-gradient(#f5f5f5 0,#eeeeee 50%,#e0e0e0 52%,#d6d6d6 100%);box-shadow:inset 1px 1px 0 rgba(255,255,255,0.7);box-sizing:border-box"></div>
<svg class="s" width="1" height="1"><text x="507.20" y="405.60" font-size="10.30" fill="#151515" textLength="25.80" lengthAdjust="spacingAndGlyphs">RESIS</text></svg>
<div class="b" style="left:572.40px;top:394.00px;width:31.40px;height:15.80px;border:1px solid #989898;border-bottom:none;background:linear-gradient(#f5f5f5 0,#eeeeee 50%,#e0e0e0 52%,#d6d6d6 100%);box-shadow:inset 1px 1px 0 rgba(255,255,255,0.7);box-sizing:border-box"></div>
<svg class="s" width="1" height="1"><text x="576.60" y="405.60" font-size="10.30" fill="#151515" textLength="12.60" lengthAdjust="spacingAndGlyphs">TC</text></svg>
<div class="b" style="left:536.20px;top:392.20px;width:37.00px;height:19.00px;border:1px solid #989898;border-bottom:none;background:#fff;box-shadow:inset 1px 1px 0 rgba(255,255,255,0.7);box-sizing:border-box"></div>
<svg class="s" width="1" height="1"><text x="542.40" y="403.90" font-size="10.30" fill="#151515" textLength="18.90" lengthAdjust="spacingAndGlyphs">RTD</text></svg>
<div class="b" style="left:515.4px;top:420.2px;width:67.2px;height:17.2px;border:1px solid #7e7e7e;border-radius:3px;background:linear-gradient(#f5f5f5 0,#ececec 48%,#dfdfdf 52%,#d2d2d2 100%);box-shadow:inset 0 0 0 1px rgba(255,255,255,0.8);box-sizing:border-box"></div>
<svg class="b" style="left:515px;top:420px" width="52" height="18" viewBox="515 420 52 18"><text x="518.0" y="433" font-size="10.3" fill="#151515" textLength="51.6" lengthAdjust="spacingAndGlyphs">PT100/385</text></svg>
<svg class="s" width="1" height="1"><polygon points="573.3,428 579.3,428 576.3,431.5" fill="#141414"/></svg>
<div class="b" style="left:591px;top:421.8px;width:10.3px;height:10.2px;border:1px solid #9a9a9a;background:linear-gradient(135deg,#dedede,#fafafa);box-shadow:inset 0 0 0 1px #f4f4f4;box-sizing:border-box"></div>
<svg class="s" width="1" height="1"><circle cx="605.00" cy="425.20" r="1.10" fill="none" stroke="#222" stroke-width="0.80"/></svg>
<svg class="s" width="1" height="1"><text x="605.50" y="431.40" font-size="10.00" fill="#222" textLength="7.10" lengthAdjust="spacingAndGlyphs">C</text></svg>
<div class="b" style="left:429px;top:451px;width:11px;height:10.8px;border:1px solid #909090;background:linear-gradient(135deg,#dedede,#fafafa);box-shadow:inset 0 0 0 1px #f4f4f4;box-sizing:border-box"></div>
<svg class="s" width="1" height="1"><path d="M431.6 456.2 L433.8 459.0 L437.6 453.6" stroke="#3546b4" stroke-width="1.6" fill="none"/></svg>
<svg class="b" style="left:441.5px;top:452.2px" width="21" height="11" viewBox="0 0 21 11"><g stroke="#161616" stroke-width="0.95" fill="none"><path d="M0.4 2.2 H4.2 M2.3 0.3 V9.8 M0.6 4.2 V6.6 H4.2 M0.3 8.6 L4.4 7.8"/><path d="M7 0.3 L4.8 3 M7 0.3 L9.6 3 M5.6 3.6 H8.6 M5.2 5 V10 M5.2 5 H7.2 V10 M5.2 6.7 H7.2 M5.2 8.3 H7.2 M8.2 5 V8.6 M9.4 4.4 V10"/><path d="M15.6 0.2 V10 M12.3 1.6 V4.8 H18.9 V1.6 M11.6 6 V10 H19.6 V6"/></g></svg>
<div class="b" style="left:466.6px;top:446.6px;width:65.2px;height:18.8px;border:1px solid #b4cae2;background:#303030;box-shadow:inset 0 0 0 1px #eef2f8;box-sizing:border-box"></div>
<svg class="s" width="1" height="1"><text x="470.50" y="459.40" font-size="11.40" fill="#e2842c" textLength="30.50" lengthAdjust="spacingAndGlyphs">200.00</text></svg>
<svg class="s" width="1" height="1"><g fill="#222"><circle cx="544.53" cy="453.26" r="0.81" fill="none" stroke="#222" stroke-width="0.90"/><rect x="545.47" y="452.00" width="6.73" height="0.90"/><polygon points="550.67,452.90 552.20,452.00 552.20,454.41 551.80,454.41"/><rect x="546.99" y="452.00" width="1.10" height="8.80"/><rect x="547.54" y="455.64" width="2.93" height="0.90"/><rect x="549.58" y="454.69" width="0.90" height="2.91"/><rect x="546.04" y="460.10" width="3.04" height="0.90"/></g></svg>
<svg class="s" width="1" height="1"><text x="575.20" y="459.70" font-size="10.30" fill="#1e1e1e" textLength="54.50" lengthAdjust="spacingAndGlyphs">(-328-1472)</text></svg>
<svg class="s" width="1" height="1"><text x="425.30" y="516.10" font-size="10.30" fill="#1e1e1e" textLength="21.90" lengthAdjust="spacingAndGlyphs">Port:</text></svg>
<svg class="s" width="1" height="1"><text x="425.30" y="544.20" font-size="10.30" fill="#1e1e1e" textLength="36.20" lengthAdjust="spacingAndGlyphs">Interval:</text></svg>
<div class="b" style="left:473.00px;top:507.00px;width:74.50px;height:16.80px;border:1px solid #7e7e7e;border-radius:3px;background:linear-gradient(#f5f5f5 0,#ececec 48%,#dfdfdf 52%,#d2d2d2 100%);box-shadow:inset 0 0 0 1px rgba(255,255,255,0.8);box-sizing:border-box"></div>
<svg class="s" width="1" height="1"><text x="476.10" y="519.60" font-size="10.30" fill="#151515" textLength="25.90" lengthAdjust="spacingAndGlyphs">COM6</text></svg>
<svg class="s" width="1" height="1"><polygon points="537.40,514.40 543.60,514.40 540.50,517.80" fill="#141414"/></svg>
<div class="b" style="left:473.00px;top:535.00px;width:74.50px;height:17.00px;border:1px solid #7e7e7e;border-radius:3px;background:linear-gradient(#f5f5f5 0,#ececec 48%,#dfdfdf 52%,#d2d2d2 100%);box-shadow:inset 0 0 0 1px rgba(255,255,255,0.8);box-sizing:border-box"></div>
<svg class="s" width="1" height="1"><text x="476.10" y="547.60" font-size="10.30" fill="#151515" textLength="10.90" lengthAdjust="spacingAndGlyphs">2S</text></svg>
<svg class="s" width="1" height="1"><polygon points="537.40,542.50 543.60,542.50 540.50,545.90" fill="#141414"/></svg>
<div class="b" style="left:562.90px;top:507.20px;width:28.00px;height:40.80px;border:1px solid #828282;border-radius:3px;background:linear-gradient(#f4f4f4 0,#ededed 48%,#e0e0e0 52%,#d4d4d4 100%);box-shadow:inset 0 0 0 1px rgba(255,255,255,0.85);box-sizing:border-box"></div>
<svg class="s" width="1" height="1"><text x="565.50" y="531.60" font-size="10.30" fill="#151515" textLength="21.30" lengthAdjust="spacingAndGlyphs">Stop</text></svg>
<div class="b" style="left:613.20px;top:507.20px;width:52.60px;height:40.80px;border:1px solid #828282;border-radius:3px;background:linear-gradient(#f4f4f4 0,#ededed 48%,#e0e0e0 52%,#d4d4d4 100%);box-shadow:inset 0 0 0 1px rgba(255,255,255,0.85);box-sizing:border-box"></div>
<svg class="s" width="1" height="1"><text x="618.40" y="531.70" font-size="10.30" fill="#151515" textLength="41.70" lengthAdjust="spacingAndGlyphs">SaveData</text></svg>
<svg class="s" width="1" height="1"><text x="28.90" y="535.10" font-size="10.30" fill="#1e1e1e" textLength="34.10" lengthAdjust="spacingAndGlyphs">Length:</text></svg>
<div class="b" style="left:69.4px;top:523.7px;width:54px;height:16.1px;border:1px solid #fafafa;background:#303030;box-sizing:border-box;box-shadow:0 0 0 0.5px #cacaca"></div>
<svg class="s" width="1" height="1"><text x="71.30" y="536.00" font-size="11.60" fill="#e2842c" textLength="17.30" lengthAdjust="spacingAndGlyphs">240</text></svg>
<div class="b" style="left:125.3px;top:523.50px;width:11.6px;height:8.6px;border:1px solid #b8b8b8;border-radius:1.5px;background:linear-gradient(#f7f7f7,#e4e4e4);box-sizing:border-box"></div>
<div class="b" style="left:125.3px;top:533.00px;width:11.6px;height:8.6px;border:1px solid #b8b8b8;border-radius:1.5px;background:linear-gradient(#f7f7f7,#e4e4e4);box-sizing:border-box"></div>
<svg class="s" width="1" height="1"><polygon points="131.1,526.3 133.4,529.4 128.8,529.4" fill="#4a4e94"/><polygon points="128.8,535.9 133.4,535.9 131.1,539" fill="#4a4e94"/></svg>
<svg class="s" width="1" height="1"><text x="146.20" y="538.50" font-size="10.30" fill="#1e1e1e" textLength="49.60" lengthAdjust="spacingAndGlyphs">WaveShow</text></svg>
<div class="b" style="left:209.3px;top:525px;width:66.4px;height:17.2px;border:1px solid #e4e4e4;background:#fff;box-sizing:border-box"></div>
<svg class="s" width="1" height="1"><text x="212.60" y="536.80" font-size="10.30" fill="#151515" textLength="16.80" lengthAdjust="spacingAndGlyphs">ALL</text></svg>
<svg class="s" width="1" height="1"><polygon points="266,533 272.5,533 269.25,536.3" fill="#141414"/></svg>
<svg class="s" width="1" height="1"><text x="2.10" y="573.70" font-size="10.30" fill="#1e1e1e" textLength="48.80" lengthAdjust="spacingAndGlyphs">Connected</text></svg>
<div id="fl"></div><div id="fr"></div><div id="fb"></div>
</body></html>
